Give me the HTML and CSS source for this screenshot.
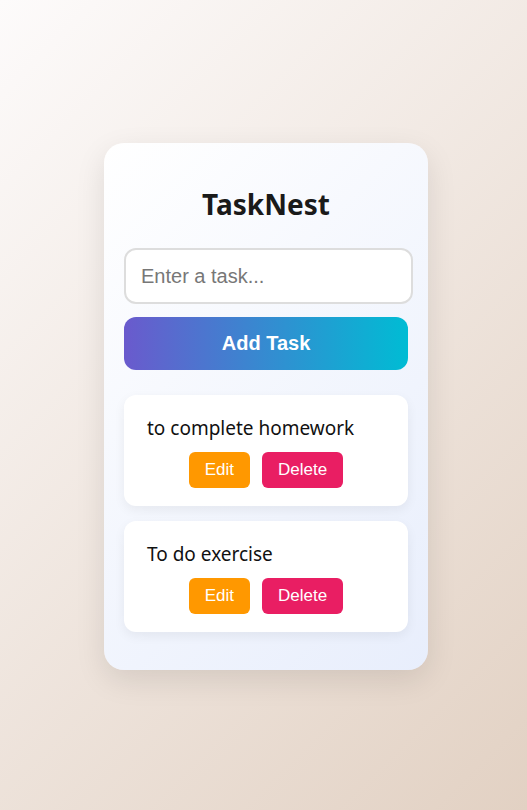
FILE: index.html
```html
<!DOCTYPE html>
<html lang="en">
<head>
<meta charset="utf-8">
<title>TaskNest</title>
<link rel="stylesheet" href="styles.css">
</head>
<body>
<main class="app">
  <h1 class="title">TaskNest</h1>
  <input class="task-input" type="text" placeholder="Enter a task...">
  <button class="add-btn">Add Task</button>
  <ul class="task-list">
    <li class="task">
      <span class="task-text">to complete homework</span>
      <div class="task-actions">
        <button class="btn edit">Edit</button>
        <button class="btn delete">Delete</button>
      </div>
    </li>
    <li class="task">
      <span class="task-text">To do exercise</span>
      <div class="task-actions">
        <button class="btn edit">Edit</button>
        <button class="btn delete">Delete</button>
      </div>
    </li>
  </ul>
</main>
</body>
</html>
```
FILE: styles.css
```css
* { box-sizing: border-box; }
html, body { height: 100%; }
body {
  margin: 0;
  padding-left: 5px;
  min-height: 810px;
  background: linear-gradient(135deg, #fdfbfb 0%, #e2d1c3 100%);
  display: flex;
  justify-content: center;
  align-items: flex-start;
  font-family: "Noto Sans", "Open Sans", sans-serif;
}
.app {
  margin-top: 143px;
  width: 324px;
  height: 527px;
  padding: 41px 20px 20px;
  border-radius: 20px;
  background: linear-gradient(135deg, #ffffff 0%, #e8eefc 100%);
  box-shadow: 0 10px 30px rgba(0, 0, 0, 0.1);
  display: flex;
  flex-direction: column;
}
.title {
  margin: 0 0 24px;
  text-align: center;
  font-size: 28px;
  font-weight: 700;
  color: #1a1a1a;
  line-height: 40px;
}
.task-input {
  width: calc(100% + 5px);
  height: 56px;
  padding: 0 15px;
  border: 2px solid #dddddd;
  border-radius: 12px;
  background: #fff;
  font-family: "Liberation Sans", Arial, sans-serif;
  font-size: 20px;
  color: #333;
  outline: none;
}
.task-input::placeholder { color: #777; }
.add-btn {
  margin-top: 13px;
  width: 100%;
  height: 53px;
  border: none;
  border-radius: 12px;
  background: linear-gradient(90deg, #6a5acd 0%, #00bcd4 100%);
  color: #fff;
  font-family: "Liberation Sans", Arial, sans-serif;
  font-size: 20px;
  font-weight: 700;
}
.task-list {
  list-style: none;
  margin: 25px 0 0;
  padding: 0;
  display: flex;
  flex-direction: column;
  gap: 15px;
}
.task {
  height: 111px;
  padding: 18px 20px 18px 23px;
  background: #fff;
  border-radius: 12px;
  box-shadow: 0 4px 12px rgba(0, 0, 0, 0.06);
  display: flex;
  flex-direction: column;
  justify-content: space-between;
}
.task-text {
  font-size: 19px;
  color: #111;
  line-height: 30px;
}
.task-actions {
  display: flex;
  justify-content: center;
  gap: 12px;
  padding-right: 3px;
}
.btn {
  height: 36px;
  padding: 0 16px;
  border: none;
  border-radius: 6px;
  color: #fff;
  font-family: "Liberation Sans", Arial, sans-serif;
  font-size: 17px;
}
.edit { background: #ff9800; }
.delete { background: #e91e63; }
```
